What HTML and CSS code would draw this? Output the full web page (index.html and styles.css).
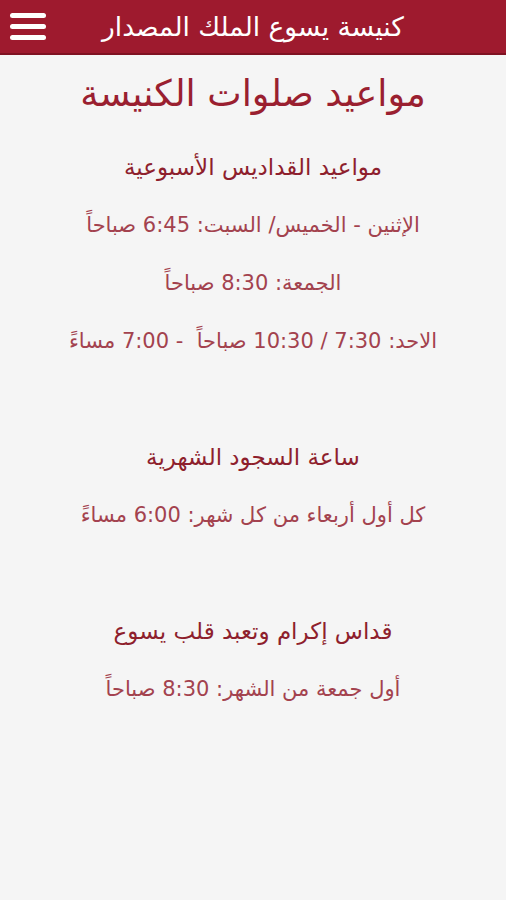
FILE: index.html
```html
<!DOCTYPE html>
<html lang="ar" dir="rtl">
<head>
  <meta charset="UTF-8" />
  <meta name="viewport" content="width=device-width, initial-scale=1.0"/>
  <title>مواعيد صلوات الكنيسة</title>
  <link rel="stylesheet" href="styles.css">
</head>
<body>
  <!-- شريط العنوان -->
  <header class="topbar">
    <div class="topbar-title">كنيسة يسوع الملك المصدار</div>
    <button class="menu-btn" aria-label="menu">
      <span></span><span></span><span></span>
    </button>
  </header>

  <main class="content">
    <h1>مواعيد صلوات الكنيسة</h1>

    <section class="block">
      <h2>مواعيد القداديس الأسبوعية</h2>
      <p>الإثنين - الخميس/ السبت: 6:45 صباحاً</p>
      <p>الجمعة: 8:30 صباحاً</p>
      <p>الاحد: 7:30 / 10:30 صباحاً &nbsp;- 7:00 مساءً</p>
    </section>

    <section class="block">
      <h2>ساعة السجود الشهرية</h2>
      <p>كل أول أربعاء من كل شهر: 6:00 مساءً</p>
    </section>

    <section class="block">
      <h2>قداس إكرام وتعبد قلب يسوع</h2>
      <p>أول جمعة من الشهر: 8:30 صباحاً</p>
    </section>
  </main>
</body>
</html>
```

FILE: styles.css
```css
body {
  font-family: 'DejaVu Sans', 'Noto Sans', sans-serif;
  margin: 0;
  background-color: #f5f5f5;
  color: #9b2c3a;
  min-height: 900px;
}
.topbar {
  height: 55px;
  background-color: #9e1a2e;
  border-bottom: 2px solid #7f1222;
  display: grid;
  grid-template-columns: 36px 1fr 36px;
  align-items: center;
  padding: 0 10px;
  box-sizing: border-box;
}
.topbar-title {
  grid-column: 2;
  text-align: center;
  color: #fff;
  font-size: 26.5px;
  line-height: 30px;
}
.menu-btn {
  grid-column: 3;
  background: none;
  border: none;
  padding: 0;
  width: 36px;
  display: flex;
  flex-direction: column;
  gap: 6px;
  cursor: pointer;
}
.menu-btn span {
  display: block;
  height: 5px;
  background-color: #fff;
  border-radius: 3px;
}
.content {
  text-align: center;
  padding-top: 17px;
}
h1 {
  margin: 0 0 22px;
  font-size: 36.5px;
  line-height: 44px;
  font-weight: normal;
  color: #9a1f30;
}
.block {
  margin-bottom: 58px;
}
h2 {
  margin: 0;
  font-size: 23px;
  font-weight: normal;
  color: #8e1f2d;
  line-height: 58px;
}
p {
  margin: 0;
  font-size: 21px;
  color: #a3424e;
  line-height: 58px;
}
```
